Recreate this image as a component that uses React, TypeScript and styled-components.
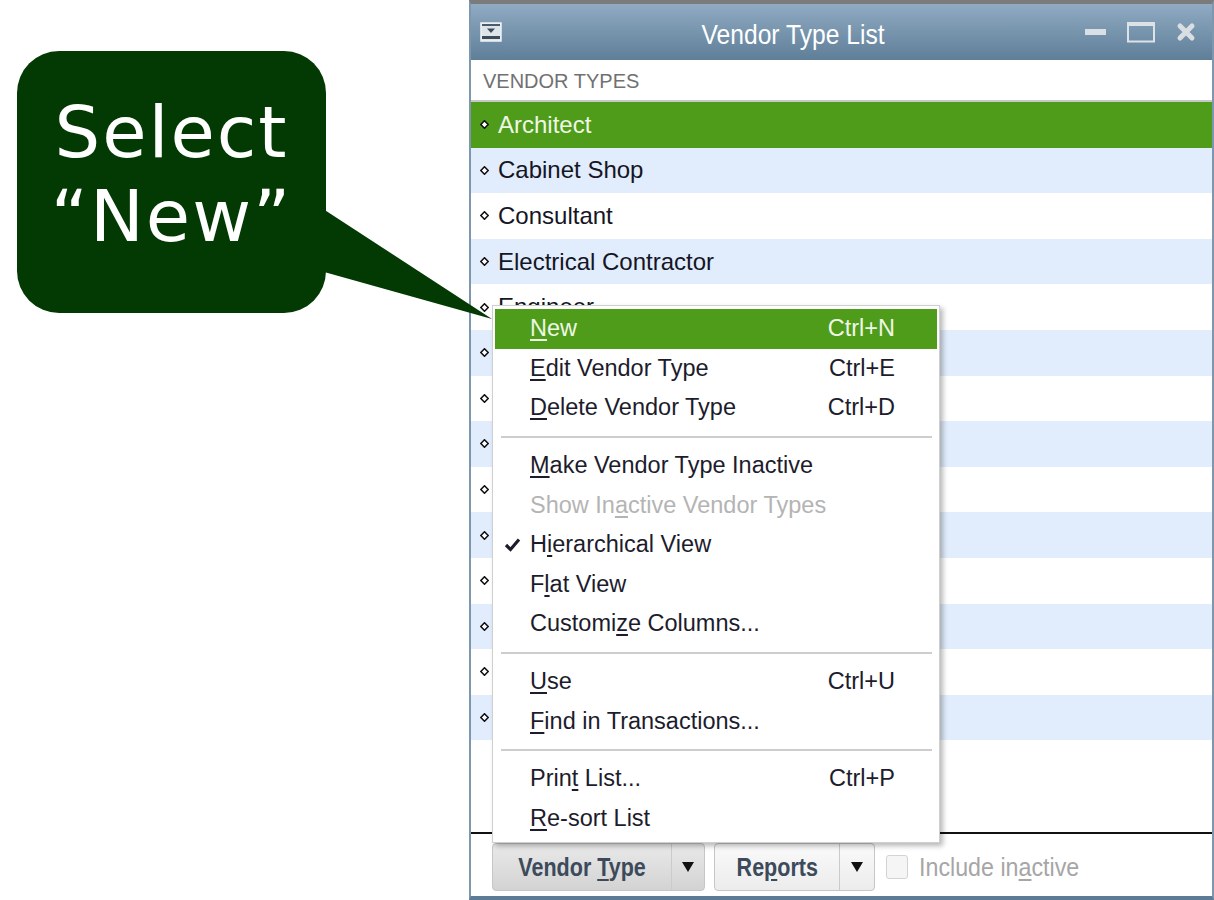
import React from "react";
import styled, { createGlobalStyle } from "styled-components";

const Global = createGlobalStyle`
  html, body {
    margin: 0;
    padding: 0;
    background: #ffffff;
  }
  body {
    font-family: "Liberation Sans", Arial, sans-serif;
  }
`;

const Page = styled.div`
  display: flex;
  width: 1214px;
  height: 900px;
  overflow: hidden;
  background: #ffffff;
`;

const LeftPane = styled.div`
  width: 469px;
  flex-shrink: 0;
  padding: 51px 0 0 17px;
  box-sizing: border-box;
`;

const Callout = styled.div`
  position: relative;
  z-index: 5;
  width: 309px;
  height: 262px;
  border-radius: 42px;
  background: #033a03;
  color: #ffffff;
  display: flex;
  flex-direction: column;
  align-items: center;
  justify-content: center;
  font-family: "DejaVu Sans", "Open Sans", sans-serif;
  font-size: 72px;
  line-height: 84px;
  letter-spacing: 2px;
  padding-bottom: 16px;
  box-sizing: border-box;
`;

const Tail = styled.svg`
  position: absolute;
  left: 300px;
  top: 140px;
  overflow: visible;
`;

const Window = styled.div`
  position: relative;
  width: 745px;
  height: 900px;
  box-sizing: border-box;
  border-top: 4px solid #7b7b7b;
  border-left: 2px solid #7d97ae;
  border-right: 2px solid #7d97ae;
  border-bottom: 4px solid #5d7b94;
  display: flex;
  flex-direction: column;
  background: #ffffff;
`;

const TitleBar = styled.div`
  height: 56px;
  flex-shrink: 0;
  display: flex;
  align-items: center;
  padding: 0 16px 0 9px;
  background: linear-gradient(#90abc3, #5f7e98);
`;

const Title = styled.div`
  flex: 1;
  text-align: center;
  color: #ffffff;
  font-size: 28px;
  padding-top: 6px;
`;

/* the original UI font is a narrow face; squeeze the wide fallback */
const Narrow = styled.span<{ $origin?: string; $scale?: number }>`
  display: inline-block;
  transform: scaleX(${(p) => p.$scale ?? 0.86});
  transform-origin: ${(p) => p.$origin || "center"};
  white-space: nowrap;
`;

const Controls = styled.div`
  display: flex;
  align-items: center;
  gap: 21px;
`;

const Header = styled.div`
  height: 42px;
  flex-shrink: 0;
  box-sizing: border-box;
  display: flex;
  align-items: center;
  padding: 3px 0 0 12px;
  border-bottom: 2px solid #c8c8c8;
  color: #717171;
  font-size: 20px;
`;

const List = styled.div`
  flex: 1;
  overflow: hidden;
`;

const Row = styled.div<{ $tone: "sel" | "alt" | "plain" }>`
  height: 45.6px;
  display: flex;
  align-items: center;
  padding-left: 9px;
  gap: 9px;
  font-size: 24px;
  background: ${(p) =>
    p.$tone === "sel" ? "#4f9c1b" : p.$tone === "alt" ? "#e1edfc" : "#ffffff"};
  color: ${(p) => (p.$tone === "sel" ? "#eef7e4" : "#151525")};
`;

const Footer = styled.div`
  height: 64px;
  flex-shrink: 0;
  box-sizing: border-box;
  border-top: 2px solid #111111;
  display: flex;
  align-items: flex-start;
  padding: 9px 0 0 21px;
  gap: 9px;
`;

const SplitButton = styled.div<{ $shade: boolean }>`
  display: flex;
  height: 48px;
  box-sizing: border-box;
  border: 1px solid #c6c6c6;
  border-radius: 4px;
  background: ${(p) =>
    p.$shade
      ? "linear-gradient(#e9e9e9, #d3d3d3)"
      : "linear-gradient(#fafafa, #ececec)"};
  font-weight: bold;
  font-size: 25px;
  color: #3c4a5b;
`;

const ButtonLabel = styled.div<{ $w: number }>`
  width: ${(p) => p.$w}px;
  display: flex;
  align-items: center;
  justify-content: center;
  border-right: 1px solid #cbcbcb;
`;

const ButtonDrop = styled.div<{ $w: number }>`
  width: ${(p) => p.$w}px;
  display: flex;
  align-items: center;
  justify-content: center;
`;

const CheckLabel = styled.label`
  display: flex;
  align-items: center;
  gap: 11px;
  height: 48px;
  margin-left: 2px;
  color: #a6a6a6;
  font-size: 25px;
`;

const CheckBox = styled.span`
  width: 22px;
  height: 24px;
  box-sizing: border-box;
  border: 1px solid #d3d3d3;
  border-radius: 3px;
  background: #f5f5f5;
`;

const Menu = styled.div`
  position: absolute;
  z-index: 2;
  top: 301px;
  left: 21px;
  width: 448px;
  box-sizing: border-box;
  padding: 3px 2px 4px;
  background: #ffffff;
  border: 1px solid #cfcfcf;
  box-shadow: 3px 3px 5px rgba(0, 0, 0, 0.28);
  font-size: 23.5px;
`;

const Item = styled.div<{ $active?: boolean; $disabled?: boolean }>`
  height: 39.6px;
  display: grid;
  grid-template-columns: 35px 1fr auto;
  align-items: center;
  padding-right: 42px;
  background: ${(p) => (p.$active ? "#4f9c1b" : "transparent")};
  color: ${(p) =>
    p.$active ? "#eef7e4" : p.$disabled ? "#b4b4b4" : "#1c1c2c"};
`;

const Mark = styled.span`
  display: flex;
  justify-content: flex-end;
  padding-right: 9px;
`;

const Shortcut = styled.span`
  text-align: right;
`;

const Separator = styled.div`
  height: 18px;
  display: flex;
  align-items: center;
  padding: 0 5px 0 6px;
  &::after {
    content: "";
    flex: 1;
    height: 2px;
    background: #cdcdcd;
  }
`;

const Key = styled.span`
  text-decoration: underline;
  text-underline-offset: 3px;
`;

const Diamond = () => (
  <svg width="9" height="9" viewBox="0 0 9 9">
    <path d="M4.5 0.8 L8.2 4.5 L4.5 8.2 L0.8 4.5 Z" fill="#ffffff" stroke="#111" strokeWidth="1.6" />
  </svg>
);

const Caret = () => (
  <svg width="12" height="10" viewBox="0 0 12 10">
    <path d="M0 0 H12 L6 10 Z" fill="#111" />
  </svg>
);

// rows past "Engineer" sit under the open menu, only their bullets show
const types: { name: string; bullet: boolean }[] = [
  { name: "Architect", bullet: true },
  { name: "Cabinet Shop", bullet: true },
  { name: "Consultant", bullet: true },
  { name: "Electrical Contractor", bullet: true },
  { name: "Engineer", bullet: true },
  ...Array.from({ length: 9 }, () => ({ name: "", bullet: true })),
  { name: "", bullet: false },
  { name: "", bullet: false },
];

type MenuEntry =
  | { sep: true }
  | {
      sep?: false;
      label: React.ReactNode;
      shortcut?: string;
      active?: boolean;
      disabled?: boolean;
      checked?: boolean;
    };

const entries: MenuEntry[] = [
  { label: <><Key>N</Key>ew</>, shortcut: "Ctrl+N", active: true },
  { label: <><Key>E</Key>dit Vendor Type</>, shortcut: "Ctrl+E" },
  { label: <><Key>D</Key>elete Vendor Type</>, shortcut: "Ctrl+D" },
  { sep: true },
  { label: <><Key>M</Key>ake Vendor Type Inactive</> },
  { label: <>Show In<Key>a</Key>ctive Vendor Types</>, disabled: true },
  { label: <>H<Key>i</Key>erarchical View</>, checked: true },
  { label: <>F<Key>l</Key>at View</> },
  { label: <>Customi<Key>z</Key>e Columns...</> },
  { sep: true },
  { label: <><Key>U</Key>se</>, shortcut: "Ctrl+U" },
  { label: <><Key>F</Key>ind in Transactions...</> },
  { sep: true },
  { label: <>Prin<Key>t</Key> List...</>, shortcut: "Ctrl+P" },
  { label: <><Key>R</Key>e-sort List</> },
];

function App() {
  return (
    <Page>
      <Global />
      <LeftPane>
        <Callout>
          <div>Select</div>
          <div>“New”</div>
          <Tail width="176" height="130" viewBox="0 0 176 130">
            <polygon points="0,14 0,79 175,128" fill="#033a03" />
          </Tail>
        </Callout>
      </LeftPane>

      <Window>
        <TitleBar>
          <svg width="22" height="20" viewBox="0 0 22 20">
            <rect x="1" y="1" width="20" height="18" fill="#dde4ea" stroke="#eef2f5" strokeWidth="1.5" />
            <rect x="2" y="2" width="18" height="2" fill="#4a5b6b" />
            <rect x="2" y="14" width="18" height="3" fill="#3b4b5a" />
            <path d="M7 6.5 H15 L11 11 Z" fill="#3b4b5a" />
          </svg>
          <Title>
            <Narrow $scale={0.88}>Vendor Type List</Narrow>
          </Title>
          <Controls>
            <svg width="21" height="20" viewBox="0 0 21 20">
              <rect x="0" y="7" width="21" height="6" fill="#d9dfe4" />
            </svg>
            <svg width="28" height="21" viewBox="0 0 28 21">
              <rect x="1" y="1.5" width="26" height="18" fill="none" stroke="#dde2e7" strokeWidth="2" />
              <rect x="0" y="0" width="28" height="4" fill="#dde2e7" />
            </svg>
            <svg width="20" height="20" viewBox="0 0 20 20">
              <path d="M4 4 L16 16 M16 4 L4 16" stroke="#d9dee3" strokeWidth="5" strokeLinecap="round" />
            </svg>
          </Controls>
        </TitleBar>

        <Header>VENDOR TYPES</Header>

        <List>
          {types.map((t, i) => (
            <Row
              key={i}
              $tone={
                i === 0 ? "sel" : i % 2 === 1 && t.bullet ? "alt" : "plain"
              }
            >
              {t.bullet && <Diamond />}
              {t.name}
            </Row>
          ))}
        </List>

        <Footer>
          <SplitButton $shade>
            <ButtonLabel $w={178}>
              <Narrow>
                Vendor <Key>T</Key>ype
              </Narrow>
            </ButtonLabel>
            <ButtonDrop $w={32}>
              <Caret />
            </ButtonDrop>
          </SplitButton>
          <SplitButton $shade={false}>
            <ButtonLabel $w={124}>
              <Narrow>
                Re<Key>p</Key>orts
              </Narrow>
            </ButtonLabel>
            <ButtonDrop $w={34}>
              <Caret />
            </ButtonDrop>
          </SplitButton>
          <CheckLabel>
            <CheckBox />
            <Narrow $origin="left" $scale={0.93}>
              Include in<Key>a</Key>ctive
            </Narrow>
          </CheckLabel>
        </Footer>

        <Menu>
          {entries.map((e, i) =>
            e.sep ? (
              <Separator key={i} />
            ) : (
              <Item key={i} $active={e.active} $disabled={e.disabled}>
                <Mark>
                  {e.checked && (
                    <svg width="17" height="15" viewBox="0 0 17 15">
                      <path d="M2 8 L6.5 12.5 L15 2.5" fill="none" stroke="#1c1c2c" strokeWidth="3.2" />
                    </svg>
                  )}
                </Mark>
                <span>{e.label}</span>
                <Shortcut>{e.shortcut}</Shortcut>
              </Item>
            )
          )}
        </Menu>
      </Window>
    </Page>
  );
}

export default React.memo(App);
